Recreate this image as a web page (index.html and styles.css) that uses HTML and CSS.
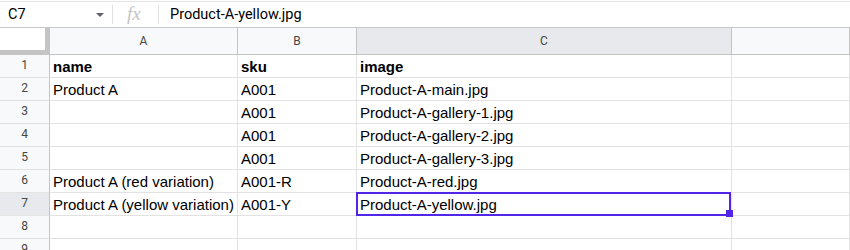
FILE: index.html
```html
<!DOCTYPE html>
<html lang="en">
  <head>
    <meta charset="UTF-8" />
    <title>Sheet</title>
    <link rel="stylesheet" href="styles.css">
  </head>
  <body>
    <div class="formula-bar">
      <div class="name-box">
        <span>C7</span>
        <svg class="caret" width="8" height="4" viewBox="0 0 8 4"><path d="M0 0h8L4 4z" fill="#5f6368"/></svg>
      </div>
      <div class="fx">fx</div>
      <div class="formula">Product-A-yellow.jpg</div>
    </div>

    <div class="grid">
      <div class="corner"><div class="freeze"></div></div>
      <div class="col-head">A</div>
      <div class="col-head">B</div>
      <div class="col-head selected">C</div>
      <div class="col-head"></div>

      <div class="row-head">1</div>
      <div class="cell bold">name</div>
      <div class="cell bold">sku</div>
      <div class="cell bold">image</div>
      <div class="cell"></div>

      <div class="row-head">2</div>
      <div class="cell">Product A</div>
      <div class="cell">A001</div>
      <div class="cell">Product-A-main.jpg</div>
      <div class="cell"></div>

      <div class="row-head">3</div>
      <div class="cell"></div>
      <div class="cell">A001</div>
      <div class="cell">Product-A-gallery-1.jpg</div>
      <div class="cell"></div>

      <div class="row-head">4</div>
      <div class="cell"></div>
      <div class="cell">A001</div>
      <div class="cell">Product-A-gallery-2.jpg</div>
      <div class="cell"></div>

      <div class="row-head">5</div>
      <div class="cell"></div>
      <div class="cell">A001</div>
      <div class="cell">Product-A-gallery-3.jpg</div>
      <div class="cell"></div>

      <div class="row-head">6</div>
      <div class="cell">Product A (red variation)</div>
      <div class="cell">A001-R</div>
      <div class="cell">Product-A-red.jpg</div>
      <div class="cell"></div>

      <div class="row-head selected">7</div>
      <div class="cell">Product A (yellow variation)</div>
      <div class="cell">A001-Y</div>
      <div class="cell active">Product-A-yellow.jpg<span class="handle"></span></div>
      <div class="cell"></div>

      <div class="row-head">8</div>
      <div class="cell"></div>
      <div class="cell"></div>
      <div class="cell"></div>
      <div class="cell"></div>

      <div class="row-head">9</div>
      <div class="cell"></div>
      <div class="cell"></div>
      <div class="cell"></div>
      <div class="cell"></div>
    </div>
  </body>
</html>
```

FILE: styles.css
```css
body {
  margin: 0;
  font-family: "Liberation Sans", Arial, sans-serif;
  background: #fff;
  overflow: hidden;
}

.formula-bar {
  display: flex;
  align-items: center;
  margin-top: 1px;
  height: 25px;
  border-top: 1px solid #e3e3e3;
  border-bottom: 1px solid #c7c7c7;
  font-family: Roboto, sans-serif;
  font-size: 14.5px;
  color: #000;
}

.name-box {
  display: flex;
  align-items: center;
  justify-content: space-between;
  width: 96px;
  padding: 0 8px 0 8px;
  height: 19px;
  border-right: 1px solid #e0e0e0;
}

.caret {
  margin-top: 1px;
}

.fx {
  width: 46px;
  height: 19px;
  border-right: 1px solid #e0e0e0;
  padding-left: 14px;
  box-sizing: border-box;
  font-family: "Liberation Serif", serif;
  font-style: italic;
  font-size: 19px;
  line-height: 18px;
  color: #c4c4c4;
}

.formula {
  padding-left: 11px;
}

.grid {
  display: grid;
  grid-template-columns: 50px 188px 119px 375px 1fr;
  grid-template-rows: 27px;
  grid-auto-rows: 23px;
}

.grid > div {
  box-sizing: border-box;
}

.corner {
  background: #f8f9fa;
  border-right: 1px solid #c4c4c4;
  border-bottom: 1px solid #c4c4c4;
}

.freeze {
  width: 49px;
  height: 26px;
  box-sizing: border-box;
  background: #fff;
  border-right: 4px solid #c4c4c4;
  border-bottom: 4px solid #c4c4c4;
}

.col-head {
  background: #f8f9fa;
  border-right: 1px solid #c4c4c4;
  border-bottom: 1px solid #c4c4c4;
  text-align: center;
  line-height: 26px;
  font-family: Roboto, sans-serif;
  font-size: 12px;
  color: #444746;
}

.row-head {
  background: #f8f9fa;
  border-right: 1px solid #c4c4c4;
  border-bottom: 1px solid #e2e2e2;
  text-align: center;
  line-height: 21px;
  font-family: Roboto, sans-serif;
  font-size: 12px;
  color: #444746;
}

.col-head.selected,
.row-head.selected {
  background: #e7e9ec;
}

.cell {
  border-right: 1px solid #e2e2e2;
  border-bottom: 1px solid #e2e2e2;
  padding-left: 3px;
  font-size: 15px;
  line-height: 23px;
  color: #000;
  white-space: nowrap;
  overflow: hidden;
}

.bold {
  font-weight: bold;
}

.cell.active {
  position: relative;
  overflow: visible;
}

.cell.active::after {
  content: "";
  position: absolute;
  left: -1px;
  top: -1px;
  width: 375px;
  height: 24px;
  box-sizing: border-box;
  border: 2px solid #5226e9;
}

.handle {
  position: absolute;
  right: -2px;
  bottom: -2px;
  width: 7px;
  height: 7px;
  background: #5226e9;
  z-index: 1;
}
```
